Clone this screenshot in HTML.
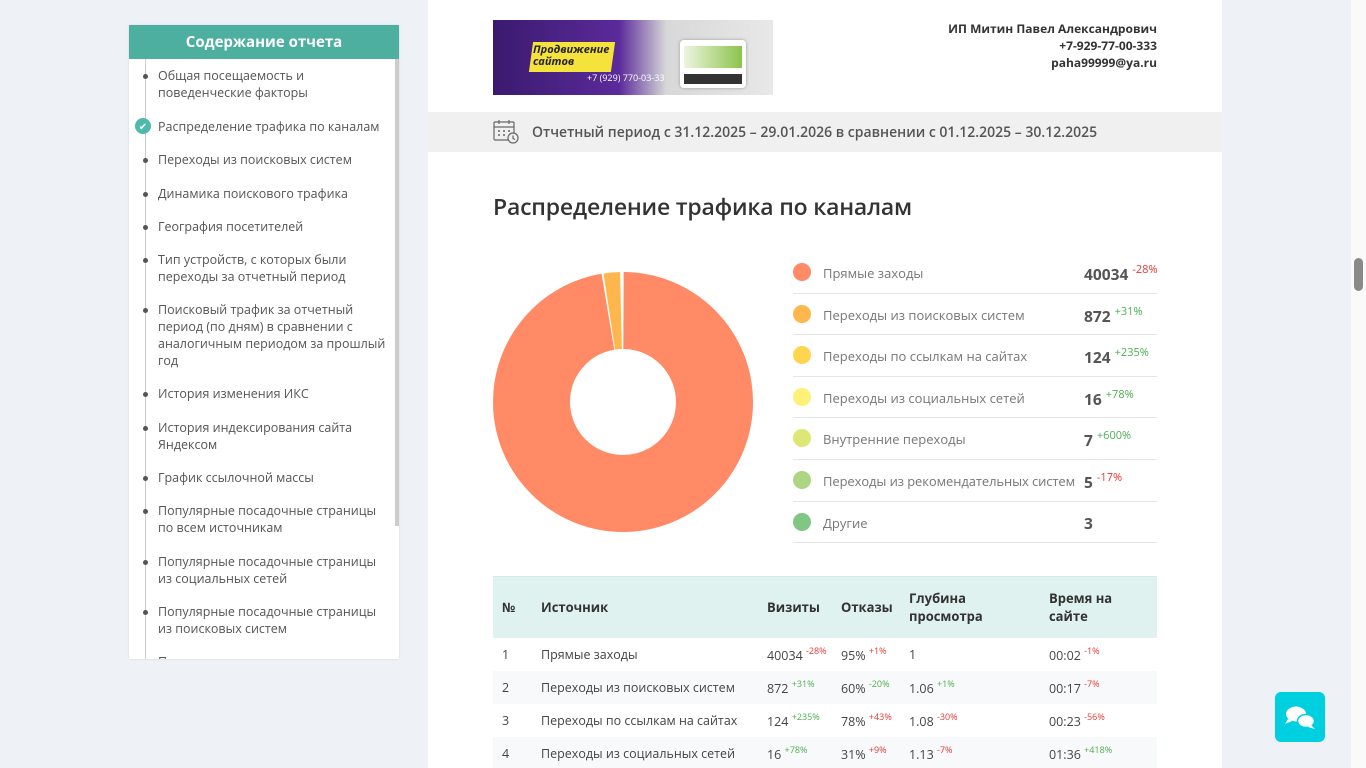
<!DOCTYPE html>
<html style="overflow:hidden;height:768px"><head><meta charset="utf-8">
<style>
*{box-sizing:border-box;margin:0;padding:0}
body{width:1366px;height:768px;overflow:hidden;background:#eef2f7;font-family:"Open Sans","Liberation Sans","DejaVu Sans",sans-serif;position:relative;color:#555}
.abs{position:absolute}
#side{left:129px;top:25px;width:270px;height:634px;background:#fff;box-shadow:0 0 2px rgba(0,0,0,.12);overflow:hidden}
#side .hd{height:34px;background:#4caf9f;color:#fff;font-weight:bold;font-size:15px;text-align:center;line-height:34px}
#side .line{left:16px;top:34px;width:1px;height:600px;background:#ccc}
#side .sb{left:266px;top:34px;width:4px;height:467px;background:#ccc}
.it{position:absolute;left:29px;width:230px;font-size:12.5px;line-height:17px;color:#555}
.it:before{content:"";position:absolute;left:-15px;top:7px;width:5px;height:5px;border-radius:50%;background:#555}
.it.ck:before{display:none}
#main{left:428px;top:0;width:794px;height:768px;background:#fff;overflow:hidden}
.per{left:428px;top:112px;width:794px;height:40px;background:#f0f0f0}
h1{position:absolute;left:493px;top:190px;font-size:23px;font-weight:600;color:#333;letter-spacing:-.2px;white-space:nowrap}
.lg{position:absolute;left:793px;width:364px;height:41.6px;border-bottom:1px solid #e5e5e5;font-size:13px;color:#777;white-space:nowrap}
.lg .d{position:absolute;left:0;top:11px;width:18px;height:18px;border-radius:50%}
.lg .t{position:absolute;left:30px;top:12px}
.lg .n{position:absolute;left:291px;top:10px;font-size:15.5px;color:#555;font-weight:bold;white-space:nowrap}
.lg .n sup{font-size:11px;font-weight:normal;vertical-align:7px}
.g{color:#4caf50}.r{color:#e53935}
table{position:absolute;left:493px;top:576px;width:664px;border-collapse:collapse;font-size:12.5px;color:#444;white-space:nowrap;table-layout:fixed}
th{background:#e0f2ef;text-align:left;font-weight:bold;height:61px;padding:0 9px;font-size:13px;line-height:18px;color:#333;border-top:1px solid #d5e9e5}
td{height:33px;padding:0 9px;overflow:visible}
tr:nth-child(odd) td{background:#f8f9fa}
td sup{font-size:9px;vertical-align:6px}
</style></head><body>
<div id="side" class="abs">
<div class="hd">Содержание отчета</div>
<div class="line abs"></div>
<div class="sb abs"></div>
<div class="it" style="top:42px">Общая посещаемость и поведенческие факторы</div>
<div class="it ck" style="top:93px"><span class="abs" style="left:-23px;top:0;width:16px;height:16px;border-radius:50%;background:#4fb9aa;color:#fff;font-size:10px;line-height:16px;text-align:center">✔</span>Распределение трафика по каналам</div>
<div class="it" style="top:126px">Переходы из поисковых систем</div>
<div class="it" style="top:160px">Динамика поискового трафика</div>
<div class="it" style="top:193px">География посетителей</div>
<div class="it" style="top:226px">Тип устройств, с которых были переходы за отчетный период</div>
<div class="it" style="top:276px">Поисковый трафик за отчетный период (по дням) в сравнении с аналогичным периодом за прошлый год</div>
<div class="it" style="top:360px">История изменения ИКС</div>
<div class="it" style="top:394px">История индексирования сайта Яндексом</div>
<div class="it" style="top:444px">График ссылочной массы</div>
<div class="it" style="top:477px">Популярные посадочные страницы по всем источникам</div>
<div class="it" style="top:528px">Популярные посадочные страницы из социальных сетей</div>
<div class="it" style="top:578px">Популярные посадочные страницы из поисковых систем</div>
<div class="it" style="top:628px">Популярные посадочные страницы</div>
</div>
<div id="main" class="abs"></div>
<div class="abs" style="left:493px;top:20px;width:280px;height:75px;background:linear-gradient(90deg,#3a1a6e 0%,#5b2a9a 45%,#d8d8d8 62%,#e8e8e8 100%);overflow:hidden">
<div class="abs" style="left:38px;top:22px;width:82px;height:30px;background:#f5e23a;transform:skew(-8deg)"></div>
<div class="abs" style="left:40px;top:24px;font-size:11px;font-style:italic;font-weight:bold;color:#222;line-height:12px">Продвижение<br>сайтов</div>
<div class="abs" style="left:94px;top:51px;font-size:9px;color:#fff">+7 (929) 770-03-33</div>
<div class="abs" style="left:187px;top:20px;width:66px;height:48px;background:#fff;border-radius:4px;box-shadow:0 0 3px #999"><div style="margin:6px 4px;height:22px;background:linear-gradient(90deg,#eef5e0,#8bc34a)"></div><div style="margin:0 4px;height:10px;background:#333"></div></div>
</div>
<div class="abs" style="left:860px;top:20px;width:297px;text-align:right;font-size:12px;font-weight:bold;color:#333;line-height:17px">ИП Митин Павел Александрович<br>+7-929-77-00-333<br>paha99999@ya.ru</div>
<div class="per abs"></div>
<svg class="abs" style="left:493px;top:119px" width="27" height="26" viewBox="0 0 27 26" fill="none" stroke="#666" stroke-width="1.2"><rect x="1" y="3" width="20" height="18" rx="1"/><path d="M1 8h20M6 1v4M16 1v4"/><path d="M5 12h2M10 12h2M15 12h2M5 16h2M10 16h2" stroke-width="1.5"/><circle cx="20" cy="19" r="5" fill="#f0f0f0"/><path d="M20 16.5v3l2 1"/></svg>
<div class="abs" style="left:532px;top:123px;font-size:14px;font-weight:600;color:#555;white-space:nowrap">Отчетный период с 31.12.2025 – 29.01.2026 в сравнении с 01.12.2025 – 30.12.2025</div>
<h1>Распределение трафика по каналам</h1>
<svg class="abs" style="left:493px;top:272px" width="260" height="260" viewBox="0 0 260 260">
<g transform="rotate(-90 130 130)" fill="none" stroke-width="77">
<circle cx="130" cy="130" r="91.5" stroke="#ff8a65" stroke-dasharray="559 100" stroke-dashoffset="-0.5"/>
<circle cx="130" cy="130" r="91.5" stroke="#ffb74d" stroke-dasharray="11.7 600" stroke-dashoffset="-560.9"/>
</g></svg>
<div class="lg" style="top:252px"><span class="d" style="background:#ff8a65"></span><span class="t">Прямые заходы</span><span class="n">40034 <sup class="r">-28%</sup></span></div>
<div class="lg" style="top:293.6px"><span class="d" style="background:#ffb74d"></span><span class="t">Переходы из поисковых систем</span><span class="n">872 <sup class="g">+31%</sup></span></div>
<div class="lg" style="top:335.2px"><span class="d" style="background:#ffd54f"></span><span class="t">Переходы по ссылкам на сайтах</span><span class="n">124 <sup class="g">+235%</sup></span></div>
<div class="lg" style="top:376.8px"><span class="d" style="background:#fff176"></span><span class="t">Переходы из социальных сетей</span><span class="n">16 <sup class="g">+78%</sup></span></div>
<div class="lg" style="top:418.4px"><span class="d" style="background:#dce775"></span><span class="t">Внутренние переходы</span><span class="n">7 <sup class="g">+600%</sup></span></div>
<div class="lg" style="top:460px"><span class="d" style="background:#aed581"></span><span class="t" style="letter-spacing:-.1px">Переходы из рекомендательных систем</span><span class="n">5 <sup class="r">-17%</sup></span></div>
<div class="lg" style="top:501.6px"><span class="d" style="background:#81c784"></span><span class="t">Другие</span><span class="n">3</span></div>
<table>
<colgroup><col style="width:39px"><col style="width:226px"><col style="width:74px"><col style="width:68px"><col style="width:140px"><col></colgroup>
<tr><th>№</th><th>Источник</th><th>Визиты</th><th>Отказы</th><th>Глубина<br>просмотра</th><th>Время на<br>сайте</th></tr>
<tr><td>1</td><td>Прямые заходы</td><td>40034 <sup class="r">-28%</sup></td><td>95% <sup class="r">+1%</sup></td><td>1</td><td>00:02 <sup class="r">-1%</sup></td></tr>
<tr><td>2</td><td>Переходы из поисковых систем</td><td>872 <sup class="g">+31%</sup></td><td>60% <sup class="g">-20%</sup></td><td>1.06 <sup class="g">+1%</sup></td><td>00:17 <sup class="r">-7%</sup></td></tr>
<tr><td>3</td><td>Переходы по ссылкам на сайтах</td><td>124 <sup class="g">+235%</sup></td><td>78% <sup class="r">+43%</sup></td><td>1.08 <sup class="r">-30%</sup></td><td>00:23 <sup class="r">-56%</sup></td></tr>
<tr><td>4</td><td>Переходы из социальных сетей</td><td>16 <sup class="g">+78%</sup></td><td>31% <sup class="r">+9%</sup></td><td>1.13 <sup class="r">-7%</sup></td><td>01:36 <sup class="g">+418%</sup></td></tr>
</table>
<div class="abs" style="left:1351px;top:0;width:15px;height:768px;background:#fafafa"></div>
<div class="abs" style="left:1354px;top:258px;width:9px;height:33px;border-radius:5px;background:#8a8a8a"></div>
<div class="abs" style="left:1275px;top:692px;width:50px;height:50px;border-radius:6px;background:#00cfe0">
<svg width="50" height="50" viewBox="0 0 50 50" fill="#fff"><ellipse cx="21" cy="22" rx="10" ry="7.5"/><path d="M13 27l-3 5 7-3z"/><ellipse cx="31" cy="29" rx="8.5" ry="6.5" stroke="#00cfe0" stroke-width="1.5"/><path d="M36 33l4 4-7-2z"/></svg>
</div>
</body></html>
